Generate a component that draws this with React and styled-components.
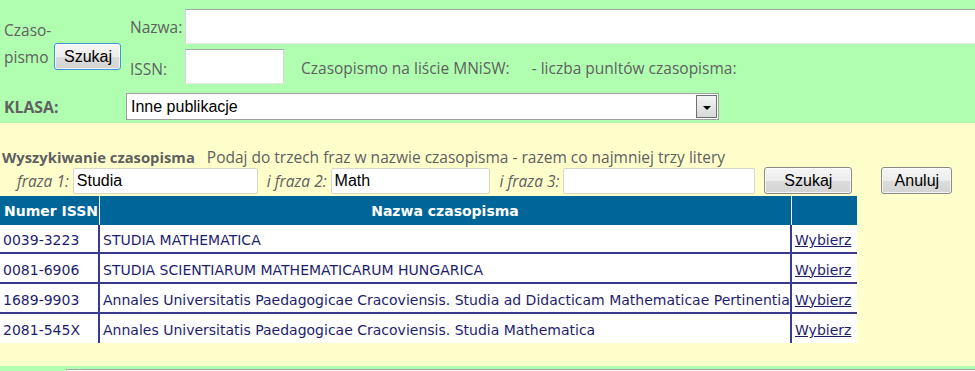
import React from "react";
import styled, { createGlobalStyle } from "styled-components";

const GREEN = "#b0ffb0";
const YELLOW = "#ffffcc";
const LABEL = "#606060";
const NAVY = "#1e1e6e";
const UI = `"Open Sans", "Noto Sans", sans-serif`;
const FS = "15.5px";

const Global = createGlobalStyle`
  html, body { margin: 0; padding: 0; background: ${GREEN}; overflow: hidden; }
  body { font-family: ${UI}; }
  * { box-sizing: border-box; }
`;

const Top = styled.section`
  background: ${GREEN};
  height: 123px;
  padding-top: 9px;
  overflow: hidden;
`;

const TopGrid = styled.div`
  display: grid;
  grid-template-columns: 126px 59px 1fr;
  grid-template-rows: 35px 35px;
  row-gap: 5px;
`;

const LeftCell = styled.div`
  grid-row: 1 / 3;
  padding: 12px 0 0 4px;
  color: ${LABEL};
  font-size: ${FS};
  line-height: 18px;
`;

const PismoRow = styled.div`
  display: flex;
  align-items: center;
  gap: 6px;
  margin-top: 4px;
`;

const Label = styled.div`
  color: ${LABEL};
  font-size: ${FS};
  display: flex;
  align-items: center;
  padding: ${(p) => p.$pad || "0 0 0 4px"};
  white-space: nowrap;
`;

const TextBox = styled.input`
  height: ${(p) => p.$h || 35}px;
  width: ${(p) => p.$w || 100}px;
  flex: none;
  border: 1px solid;
  border-color: ${(p) => (p.$soft ? "#d8d8c8" : "#a8a8a8 #d4d4d4 #e6e6e6 #d4d4d4")};
  background: #fff;
  font-family: "Liberation Sans", Arial, sans-serif;
  font-size: 16px;
  color: #000;
  padding: 0 3px;
  margin: 0;
  outline: none;
  border-radius: ${(p) => (p.$soft ? "2px" : "0")};
`;

const WideBox = styled(TextBox)`
  width: calc(100% + 6px);
`;

const IssnRow = styled.div`
  display: flex;
  align-items: center;
`;

const Info = styled.span`
  color: ${LABEL};
  font-size: ${FS};
  margin-left: ${(p) => p.$ml}px;
  padding-top: 3px;
  white-space: nowrap;
`;

const Button = styled.button`
  flex: none;
  height: ${(p) => p.$h || 27}px;
  width: ${(p) => p.$w}px;
  margin: 0 0 0 ${(p) => p.$ml || 0}px;
  font-family: "Liberation Sans", Arial, sans-serif;
  font-size: 16px;
  color: #000;
  border: 1px solid ${(p) => (p.$focus ? "#3c9ad6" : "#8a8a8a")};
  border-radius: 3px;
  background: linear-gradient(#f6f6f6 0%, #ececec 50%, #dcdcdc 51%, #d4d4d4 100%);
  box-shadow: inset 0 0 0 1px rgba(255, 255, 255, 0.7);
  padding: 0;
  cursor: pointer;
`;

const KlasaRow = styled.div`
  display: flex;
  align-items: center;
  margin-top: 9px;
  height: 27px;
`;

const KlasaLabel = styled.div`
  width: 126px;
  padding-left: 4px;
  color: ${LABEL};
  font-weight: 700;
  font-size: 15.8px;
`;

const Select = styled.div`
  width: 593px;
  height: 27px;
  border: 1px solid #a0a0a0;
  background: #fff;
  display: flex;
  align-items: stretch;
  padding: 1px;
`;

const SelectValue = styled.div`
  flex: 1;
  font-family: "Liberation Sans", Arial, sans-serif;
  font-size: 16px;
  color: #000;
  display: flex;
  align-items: center;
  padding-left: 3px;
`;

const Arrow = styled.div`
  width: 21px;
  border: 1px solid #707070;
  background: linear-gradient(#f4f4f4, #d8d8d8);
  display: flex;
  align-items: center;
  justify-content: center;
  &::after {
    content: "";
    border-left: 4px solid transparent;
    border-right: 4px solid transparent;
    border-top: 4px solid #000;
    margin-top: 2px;
  }
`;

const Search = styled.section`
  background: ${YELLOW};
  height: 243px;
  padding-top: 25px;
`;

const TitleRow = styled.div`
  display: flex;
  align-items: baseline;
  padding-left: 2px;
  height: 18px;
  line-height: 18px;
  white-space: nowrap;
`;

const Title = styled.span`
  color: ${LABEL};
  font-weight: 700;
  font-size: 14.8px;
`;

const Hint = styled.span`
  color: ${LABEL};
  font-size: ${FS};
  margin-left: 12px;
`;

const PhraseRow = styled.div`
  display: flex;
  align-items: center;
  height: 27px;
  margin-top: 1px;
  padding-left: 17px;
`;

const PhraseLabel = styled.span`
  color: ${LABEL};
  font-style: italic;
  font-size: ${FS};
  margin-left: ${(p) => p.$ml || 0}px;
  margin-right: 4px;
  white-space: nowrap;
`;

const Table = styled.table`
  border-collapse: collapse;
  table-layout: fixed;
  width: 857px;
  margin-top: 2px;
  font-family: "DejaVu Sans", Verdana, sans-serif;
  font-size: 14px;
`;

const Col = styled.col`
  width: ${(p) => p.$w};
`;

const Th = styled.th`
  background: #006699;
  color: #fff;
  font-weight: 700;
  font-size: 14px;
  height: 29px;
  padding: 0 0 0 ${(p) => (p.$left ? 4 : 0)}px;
  white-space: nowrap;
  overflow: hidden;
  text-align: ${(p) => (p.$left ? "left" : "center")};
  border-left: 1px solid #fff;
  &:first-child { border-left: none; }
`;

const Tr = styled.tr`
  background: #fff;
  & + & td { border-top: 2px solid #3a3a8a; height: 30px; }
`;

const Td = styled.td`
  color: ${NAVY};
  height: 28px;
  padding: 3px 3px 0;
  white-space: nowrap;
  overflow: hidden;
  border-left: 2px solid #3a3a8a;
  &:first-child { border-left: none; }
`;

const Link = styled.a`
  color: ${NAVY};
  text-decoration: underline;
  cursor: pointer;
`;

const Footer = styled.footer`
  background: ${GREEN};
  padding: 3px 0 0 66px;
`;

const FooterBox = styled.div`
  height: 20px;
  border-top: 1px solid #a8a8a8;
  border-left: 1px solid #d0d0d0;
  background: #fff;
`;

const rows = [
  ["0039-3223", "STUDIA MATHEMATICA"],
  ["0081-6906", "STUDIA SCIENTIARUM MATHEMATICARUM HUNGARICA"],
  ["1689-9903", "Annales Universitatis Paedagogicae Cracoviensis. Studia ad Didacticam Mathematicae Pertinentia"],
  ["2081-545X", "Annales Universitatis Paedagogicae Cracoviensis. Studia Mathematica"],
];

export default function App() {
  return (
    <>
      <Global />
      <Top>
        <TopGrid>
          <LeftCell>
            <div>Czaso-</div>
            <PismoRow>
              <span>pismo</span>
              <Button $w={67} $focus>Szukaj</Button>
            </PismoRow>
          </LeftCell>
          <Label $pad="0 0 0 4px">Nazwa:</Label>
          <WideBox type="text" defaultValue="" />
          <Label $pad="5px 0 0 4px">ISSN:</Label>
          <IssnRow>
            <TextBox type="text" $w={99} defaultValue="" />
            <Info $ml={17}>Czasopismo na liście MNiSW:</Info>
            <Info $ml={22}>- liczba punltów czasopisma:</Info>
          </IssnRow>
        </TopGrid>
        <KlasaRow>
          <KlasaLabel>KLASA:</KlasaLabel>
          <Select role="listbox">
            <SelectValue>Inne publikacje</SelectValue>
            <Arrow />
          </Select>
        </KlasaRow>
      </Top>
      <Search>
        <TitleRow>
          <Title>Wyszykiwanie czasopisma</Title>
          <Hint>Podaj do trzech fraz w nazwie czasopisma - razem co najmniej trzy litery</Hint>
        </TitleRow>
        <PhraseRow>
          <PhraseLabel>fraza 1:</PhraseLabel>
          <TextBox $soft $h={26} $w={185} defaultValue="Studia" />
          <PhraseLabel $ml={9}>i fraza 2:</PhraseLabel>
          <TextBox $soft $h={26} $w={159} defaultValue="Math" />
          <PhraseLabel $ml={10}>i fraza 3:</PhraseLabel>
          <TextBox $soft $h={26} $w={192} defaultValue="" />
          <Button $w={88} $ml={9}>Szukaj</Button>
          <Button $w={71} $ml={29}>Anuluj</Button>
        </PhraseRow>
        <Table>
          <colgroup>
            <Col $w="99px" />
            <Col $w="692px" />
            <Col $w="66px" />
          </colgroup>
          <thead>
            <tr>
              <Th $left>Numer ISSN</Th>
              <Th>Nazwa czasopisma</Th>
              <Th></Th>
            </tr>
          </thead>
          <tbody>
            {rows.map(([issn, name]) => (
              <Tr key={issn}>
                <Td>{issn}</Td>
                <Td>{name}</Td>
                <Td><Link>Wybierz</Link></Td>
              </Tr>
            ))}
          </tbody>
        </Table>
      </Search>
      <Footer>
        <FooterBox />
      </Footer>
    </>
  );
}
